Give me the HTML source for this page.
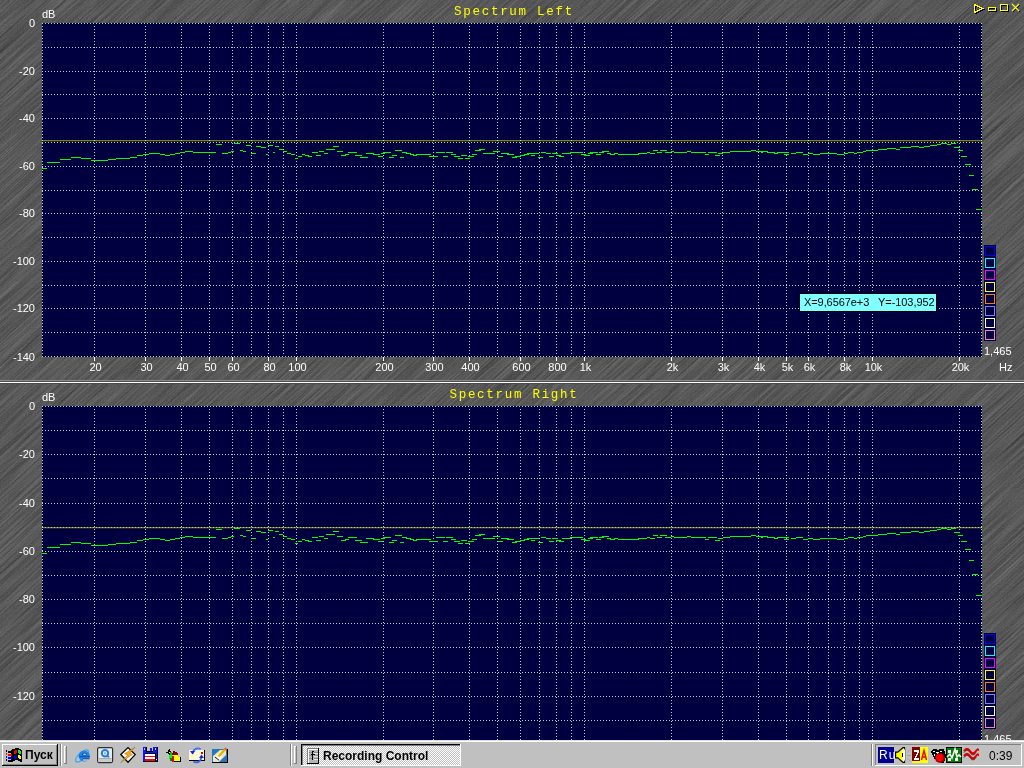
<!DOCTYPE html>
<html><head><meta charset="utf-8">
<style>
*{margin:0;padding:0;box-sizing:border-box}
html,body{width:1024px;height:768px;overflow:hidden}
body{position:relative;font-family:"Liberation Sans",sans-serif;
background-color:#5c5c5c;
}
svg{position:absolute;left:0;top:0}
.l{position:absolute;color:#fff;font-size:11px;line-height:13px;white-space:nowrap;will-change:transform}
.yl{left:0;width:35px;text-align:right}
.xl{width:61px;text-align:center}
.t{position:absolute;color:#ffff00;font-family:"Liberation Mono",monospace;font-size:12.5px;letter-spacing:1.72px;line-height:17px;white-space:pre;will-change:transform}
#tb{position:absolute;left:0;top:740px;width:1024px;height:28px;background:#c0c0c0}
.b{position:absolute;font-size:11px;line-height:13px;color:#000;white-space:nowrap;will-change:transform}
</style></head><body>
<svg width="1024" height="768" style="position:absolute;left:0;top:0">
<filter id="n" x="0" y="0" width="100%" height="100%" color-interpolation-filters="sRGB">
<feTurbulence type="fractalNoise" baseFrequency="1.3 0.012" numOctaves="3" seed="7"/>
<feColorMatrix type="matrix" values="0.3 0 0 0 0.195  0.3 0 0 0 0.195  0.3 0 0 0 0.195  0 0 0 0 1"/>
</filter>
<g transform="rotate(48 512 384)"><rect x="-300" y="-300" width="1624" height="1368" filter="url(#n)"/></g>
<filter id="g" x="0" y="0" width="100%" height="100%" color-interpolation-filters="sRGB">
<feTurbulence type="fractalNoise" baseFrequency="0.7" numOctaves="1" seed="11"/>
<feColorMatrix type="matrix" values="1 0 0 0 -0.15  1 0 0 0 -0.15  1 0 0 0 -0.15  0 0 0 0 0.1"/>
</filter>
<rect x="0" y="0" width="1024" height="768" filter="url(#g)"/>
</svg>
<svg width="1024" height="768" shape-rendering="crispEdges">
<rect x="0" y="380" width="1024" height="1" fill="#8a8a8a"/>
<rect x="0" y="381" width="1024" height="1" fill="#505050"/>
<rect x="0" y="382" width="1024" height="1" fill="#ffffff"/>
<rect x="0" y="383" width="1024" height="1" fill="#4a4a4a"/>
<rect x="42" y="23" width="940" height="334" fill="#000040"/><rect x="43" y="140" width="939" height="1" fill="#827a1c"/><rect x="43" y="141" width="939" height="1" fill="#24231e"/><g stroke="#a8dcbc" stroke-width="1" stroke-dasharray="1 2"><line x1="42" y1="23.5" x2="982" y2="23.5"/><line x1="42" y1="47.5" x2="982" y2="47.5"/><line x1="42" y1="71.5" x2="982" y2="71.5"/><line x1="42" y1="94.5" x2="982" y2="94.5"/><line x1="42" y1="118.5" x2="982" y2="118.5"/><line x1="42" y1="142.5" x2="982" y2="142.5"/><line x1="42" y1="166.5" x2="982" y2="166.5"/><line x1="42" y1="190.5" x2="982" y2="190.5"/><line x1="42" y1="213.5" x2="982" y2="213.5"/><line x1="42" y1="237.5" x2="982" y2="237.5"/><line x1="42" y1="261.5" x2="982" y2="261.5"/><line x1="42" y1="285.5" x2="982" y2="285.5"/><line x1="42" y1="308.5" x2="982" y2="308.5"/><line x1="42" y1="332.5" x2="982" y2="332.5"/><line x1="42" y1="356.5" x2="982" y2="356.5"/><line x1="94.5" y1="26" x2="94.5" y2="356"/><line x1="145.5" y1="26" x2="145.5" y2="356"/><line x1="181.5" y1="26" x2="181.5" y2="356"/><line x1="209.5" y1="26" x2="209.5" y2="356"/><line x1="232.5" y1="26" x2="232.5" y2="356"/><line x1="251.5" y1="26" x2="251.5" y2="356"/><line x1="268.5" y1="26" x2="268.5" y2="356"/><line x1="283.5" y1="26" x2="283.5" y2="356"/><line x1="296.5" y1="26" x2="296.5" y2="356"/><line x1="383.5" y1="26" x2="383.5" y2="356"/><line x1="433.5" y1="26" x2="433.5" y2="356"/><line x1="469.5" y1="26" x2="469.5" y2="356"/><line x1="497.5" y1="26" x2="497.5" y2="356"/><line x1="520.5" y1="26" x2="520.5" y2="356"/><line x1="539.5" y1="26" x2="539.5" y2="356"/><line x1="556.5" y1="26" x2="556.5" y2="356"/><line x1="571.5" y1="26" x2="571.5" y2="356"/><line x1="584.5" y1="26" x2="584.5" y2="356"/><line x1="671.5" y1="26" x2="671.5" y2="356"/><line x1="722.5" y1="26" x2="722.5" y2="356"/><line x1="758.5" y1="26" x2="758.5" y2="356"/><line x1="786.5" y1="26" x2="786.5" y2="356"/><line x1="808.5" y1="26" x2="808.5" y2="356"/><line x1="828.5" y1="26" x2="828.5" y2="356"/><line x1="844.5" y1="26" x2="844.5" y2="356"/><line x1="859.5" y1="26" x2="859.5" y2="356"/><line x1="872.5" y1="26" x2="872.5" y2="356"/><line x1="959.5" y1="26" x2="959.5" y2="356"/><line x1="42.5" y1="23" x2="42.5" y2="357"/><line x1="981.5" y1="23" x2="981.5" y2="357"/></g><path fill="#00ff00" d="M42 168h5v1h-5zM47 162h13v1h-13zM60 159h11v1h-11zM71 157h10v1h-10zM81 158h10v1h-10zM91 160h17v1h-17zM108 159h8v1h-8zM116 158h14v1h-14zM130 157h7v1h-7zM137 155h6v1h-6zM143 154h6v1h-6zM149 153h11v1h-11zM160 154h5v1h-5zM165 155h5v1h-5zM170 154h5v1h-5zM175 153h5v1h-5zM180 152h5v1h-5zM185 151h8v1h-8zM193 152h23v1h-23zM216 144h6v1h-6zM222 153h6v1h-6zM228 152h3v1h-3zM231 151h3v1h-3zM234 143h6v1h-6zM240 150h3v1h-3zM243 151h3v1h-3zM246 145h5v1h-5zM251 153h5v1h-5zM256 146h5v1h-5zM261 147h5v1h-5zM266 154h2v1h-2zM268 145h5v1h-5zM273 152h2v1h-2zM275 146h4v1h-4zM279 149h4v1h-4zM283 151h4v1h-4zM287 153h4v1h-4zM291 154h4v1h-4zM295 158h3v1h-3zM298 156h4v1h-4zM302 154h3v1h-3zM305 155h4v1h-4zM308 156h4v1h-4zM312 152h6v1h-6zM316 155h5v1h-5zM319 151h5v1h-5zM324 153h4v1h-4zM326 149h9v1h-9zM333 146h6v1h-6zM337 151h6v1h-6zM341 155h5v1h-5zM345 154h4v1h-4zM348 152h9v1h-9zM355 155h7v1h-7zM360 157h8v1h-8zM366 153h8v1h-8zM373 154h7v1h-7zM378 156h5v1h-5zM381 153h4v1h-4zM383 152h8v1h-8zM389 157h5v1h-5zM392 155h5v1h-5zM395 150h7v1h-7zM400 157h4v1h-4zM402 152h5v1h-5zM406 153h5v1h-5zM410 154h4v1h-4zM413 155h4v1h-4zM416 154h15v1h-15zM429 156h9v1h-9zM436 152h9v1h-9zM443 156h5v1h-5zM446 152h7v1h-7zM451 154h5v1h-5zM454 156h6v1h-6zM458 158h5v1h-5zM461 155h6v1h-6zM465 158h5v1h-5zM468 156h6v1h-6zM472 154h5v1h-5zM475 150h6v1h-6zM479 149h6v1h-6zM483 153h3v1h-3zM484 153h11v1h-11zM493 151h7v1h-7zM498 156h5v1h-5zM501 153h8v1h-8zM507 154h7v1h-7zM512 157h5v1h-5zM515 156h6v1h-6zM520 155h5v1h-5zM524 154h5v1h-5zM527 153h12v1h-12zM531 155h4v1h-4zM538 157h5v1h-5zM541 152h5v1h-5zM546 153h5v1h-5zM549 156h5v1h-5zM552 153h6v1h-6zM556 155h5v1h-5zM559 156h5v1h-5zM562 153h9v1h-9zM570 152h13v1h-13zM581 154h5v1h-5zM584 155h6v1h-6zM588 153h5v1h-5zM590 152h8v1h-8zM596 154h5v1h-5zM599 152h5v1h-5zM602 151h7v1h-7zM607 153h4v1h-4zM610 154h5v1h-5zM614 153h4v1h-4zM618 154h21v1h-21zM638 153h6v1h-6zM642 153h5v1h-5zM647 152h3v1h-3zM650 153h5v1h-5zM653 150h5v1h-5zM657 152h5v1h-5zM660 150h7v1h-7zM665 152h6v1h-6zM671 151h3v1h-3zM674 152h13v1h-13zM687 151h4v1h-4zM691 152h15v1h-15zM705 154h4v1h-4zM708 152h9v1h-9zM715 155h5v1h-5zM718 153h5v1h-5zM723 152h7v1h-7zM730 151h21v1h-21zM751 150h5v1h-5zM756 151h6v1h-6zM761 152h2v1h-2zM762 151h6v1h-6zM767 152h8v1h-8zM774 153h4v1h-4zM777 152h12v1h-12zM784 154h5v1h-5zM791 153h5v1h-5zM796 152h6v1h-6zM800 152h3v1h-3zM803 154h5v1h-5zM808 153h5v1h-5zM813 154h7v1h-7zM820 153h17v1h-17zM837 154h7v1h-7zM844 153h4v1h-4zM848 152h6v1h-6zM854 153h3v1h-3zM857 152h6v1h-6zM863 151h3v1h-3zM866 150h12v1h-12zM878 149h9v1h-9zM887 148h9v1h-9zM896 149h4v1h-4zM900 147h11v1h-11zM911 146h8v1h-8zM919 147h5v1h-5zM924 146h6v1h-6zM930 145h7v1h-7zM937 144h4v1h-4zM941 143h6v1h-6zM947 144h4v1h-4zM951 143h5v1h-5zM954 147h6v1h-6zM958 150h5v1h-5zM961 156h6v1h-6zM965 164h6v1h-6zM969 175h5v1h-5zM972 189h6v1h-6zM976 209h6v1h-6z"/><path fill="#fff" d="M94 357h1v4h-1zM145 357h1v4h-1zM181 357h1v4h-1zM209 357h1v4h-1zM232 357h1v4h-1zM268 357h1v4h-1zM296 357h1v4h-1zM383 357h1v4h-1zM433 357h1v4h-1zM469 357h1v4h-1zM520 357h1v4h-1zM556 357h1v4h-1zM584 357h1v4h-1zM671 357h1v4h-1zM722 357h1v4h-1zM758 357h1v4h-1zM786 357h1v4h-1zM808 357h1v4h-1zM844 357h1v4h-1zM872 357h1v4h-1zM959 357h1v4h-1z"/><rect x="984" y="245" width="12" height="96" fill="#000040"/><rect x="985.5" y="246.5" width="9" height="9" fill="none" stroke="#0000ff" stroke-width="1"/><rect x="985.5" y="258.5" width="9" height="9" fill="none" stroke="#00ffff" stroke-width="1"/><rect x="985.5" y="270.5" width="9" height="9" fill="none" stroke="#ff00ff" stroke-width="1"/><rect x="985.5" y="282.5" width="9" height="9" fill="none" stroke="#ffff00" stroke-width="1"/><rect x="985.5" y="294.5" width="9" height="9" fill="none" stroke="#ff8000" stroke-width="1"/><rect x="985.5" y="306.5" width="9" height="9" fill="none" stroke="#8080ff" stroke-width="1"/><rect x="985.5" y="318.5" width="9" height="9" fill="none" stroke="#ffffff" stroke-width="1"/><rect x="985.5" y="330.5" width="9" height="9" fill="none" stroke="#ff80c0" stroke-width="1"/>
<rect x="42" y="406" width="940" height="339" fill="#000040"/><rect x="43" y="527" width="939" height="1" fill="#827a1c"/><rect x="43" y="528" width="939" height="1" fill="#24231e"/><g stroke="#a8dcbc" stroke-width="1" stroke-dasharray="1 2"><line x1="42" y1="406.5" x2="982" y2="406.5"/><line x1="42" y1="430.5" x2="982" y2="430.5"/><line x1="42" y1="454.5" x2="982" y2="454.5"/><line x1="42" y1="478.5" x2="982" y2="478.5"/><line x1="42" y1="503.5" x2="982" y2="503.5"/><line x1="42" y1="527.5" x2="982" y2="527.5"/><line x1="42" y1="551.5" x2="982" y2="551.5"/><line x1="42" y1="575.5" x2="982" y2="575.5"/><line x1="42" y1="599.5" x2="982" y2="599.5"/><line x1="42" y1="623.5" x2="982" y2="623.5"/><line x1="42" y1="647.5" x2="982" y2="647.5"/><line x1="42" y1="672.5" x2="982" y2="672.5"/><line x1="42" y1="696.5" x2="982" y2="696.5"/><line x1="42" y1="720.5" x2="982" y2="720.5"/><line x1="42" y1="744.5" x2="982" y2="744.5"/><line x1="94.5" y1="409" x2="94.5" y2="744"/><line x1="145.5" y1="409" x2="145.5" y2="744"/><line x1="181.5" y1="409" x2="181.5" y2="744"/><line x1="209.5" y1="409" x2="209.5" y2="744"/><line x1="232.5" y1="409" x2="232.5" y2="744"/><line x1="251.5" y1="409" x2="251.5" y2="744"/><line x1="268.5" y1="409" x2="268.5" y2="744"/><line x1="283.5" y1="409" x2="283.5" y2="744"/><line x1="296.5" y1="409" x2="296.5" y2="744"/><line x1="383.5" y1="409" x2="383.5" y2="744"/><line x1="433.5" y1="409" x2="433.5" y2="744"/><line x1="469.5" y1="409" x2="469.5" y2="744"/><line x1="497.5" y1="409" x2="497.5" y2="744"/><line x1="520.5" y1="409" x2="520.5" y2="744"/><line x1="539.5" y1="409" x2="539.5" y2="744"/><line x1="556.5" y1="409" x2="556.5" y2="744"/><line x1="571.5" y1="409" x2="571.5" y2="744"/><line x1="584.5" y1="409" x2="584.5" y2="744"/><line x1="671.5" y1="409" x2="671.5" y2="744"/><line x1="722.5" y1="409" x2="722.5" y2="744"/><line x1="758.5" y1="409" x2="758.5" y2="744"/><line x1="786.5" y1="409" x2="786.5" y2="744"/><line x1="808.5" y1="409" x2="808.5" y2="744"/><line x1="828.5" y1="409" x2="828.5" y2="744"/><line x1="844.5" y1="409" x2="844.5" y2="744"/><line x1="859.5" y1="409" x2="859.5" y2="744"/><line x1="872.5" y1="409" x2="872.5" y2="744"/><line x1="959.5" y1="409" x2="959.5" y2="744"/><line x1="42.5" y1="406" x2="42.5" y2="745"/><line x1="981.5" y1="406" x2="981.5" y2="745"/></g><path fill="#00ff00" d="M42 553h5v1h-5zM47 547h13v1h-13zM60 544h11v1h-11zM71 542h10v1h-10zM81 543h10v1h-10zM91 545h17v1h-17zM108 544h8v1h-8zM116 543h14v1h-14zM130 542h7v1h-7zM137 540h6v1h-6zM143 539h6v1h-6zM149 538h11v1h-11zM160 539h5v1h-5zM165 540h5v1h-5zM170 539h5v1h-5zM175 538h5v1h-5zM180 537h5v1h-5zM185 536h8v1h-8zM193 537h23v1h-23zM216 529h6v1h-6zM222 538h6v1h-6zM228 537h3v1h-3zM231 536h3v1h-3zM234 528h6v1h-6zM240 535h3v1h-3zM243 536h3v1h-3zM246 530h5v1h-5zM251 538h5v1h-5zM256 531h5v1h-5zM261 532h5v1h-5zM266 539h2v1h-2zM268 530h5v1h-5zM273 537h2v1h-2zM275 531h4v1h-4zM279 534h4v1h-4zM283 536h4v1h-4zM287 538h4v1h-4zM291 539h4v1h-4zM295 543h3v1h-3zM298 541h4v1h-4zM302 539h3v1h-3zM305 540h4v1h-4zM308 541h4v1h-4zM312 537h6v1h-6zM316 540h5v1h-5zM319 536h5v1h-5zM324 538h4v1h-4zM326 534h9v1h-9zM333 531h6v1h-6zM337 536h6v1h-6zM341 540h5v1h-5zM345 539h4v1h-4zM348 537h9v1h-9zM355 540h7v1h-7zM360 542h8v1h-8zM366 538h8v1h-8zM373 539h7v1h-7zM378 541h5v1h-5zM381 538h4v1h-4zM383 537h8v1h-8zM389 542h5v1h-5zM392 540h5v1h-5zM395 535h7v1h-7zM400 542h4v1h-4zM402 537h5v1h-5zM406 538h5v1h-5zM410 539h4v1h-4zM413 540h4v1h-4zM416 539h15v1h-15zM429 541h9v1h-9zM436 537h9v1h-9zM443 541h5v1h-5zM446 537h7v1h-7zM451 539h5v1h-5zM454 541h6v1h-6zM458 543h5v1h-5zM461 540h6v1h-6zM465 543h5v1h-5zM468 541h6v1h-6zM472 539h5v1h-5zM475 535h6v1h-6zM479 534h6v1h-6zM483 538h3v1h-3zM484 538h11v1h-11zM493 536h7v1h-7zM498 541h5v1h-5zM501 538h8v1h-8zM507 539h7v1h-7zM512 542h5v1h-5zM515 541h6v1h-6zM520 540h5v1h-5zM524 539h5v1h-5zM527 538h12v1h-12zM531 540h4v1h-4zM538 542h5v1h-5zM541 537h5v1h-5zM546 538h5v1h-5zM549 541h5v1h-5zM552 538h6v1h-6zM556 540h5v1h-5zM559 541h5v1h-5zM562 538h9v1h-9zM570 537h13v1h-13zM581 539h5v1h-5zM584 540h6v1h-6zM588 538h5v1h-5zM590 537h8v1h-8zM596 539h5v1h-5zM599 537h5v1h-5zM602 536h7v1h-7zM607 538h4v1h-4zM610 539h5v1h-5zM614 538h4v1h-4zM618 539h21v1h-21zM638 538h6v1h-6zM642 538h5v1h-5zM647 537h3v1h-3zM650 538h5v1h-5zM653 535h5v1h-5zM657 537h5v1h-5zM660 535h7v1h-7zM665 537h6v1h-6zM671 536h3v1h-3zM674 537h13v1h-13zM687 536h4v1h-4zM691 537h15v1h-15zM705 539h4v1h-4zM708 537h9v1h-9zM715 540h5v1h-5zM718 538h5v1h-5zM723 537h7v1h-7zM730 536h21v1h-21zM751 535h5v1h-5zM756 536h6v1h-6zM761 537h2v1h-2zM762 536h6v1h-6zM767 537h8v1h-8zM774 538h4v1h-4zM777 537h12v1h-12zM784 539h5v1h-5zM791 538h5v1h-5zM796 537h6v1h-6zM800 537h3v1h-3zM803 539h5v1h-5zM808 538h5v1h-5zM813 539h7v1h-7zM820 538h17v1h-17zM837 539h7v1h-7zM844 538h4v1h-4zM848 537h6v1h-6zM854 538h3v1h-3zM857 537h6v1h-6zM863 536h3v1h-3zM866 535h12v1h-12zM878 534h9v1h-9zM887 533h9v1h-9zM896 534h4v1h-4zM900 532h11v1h-11zM911 531h8v1h-8zM919 532h5v1h-5zM924 531h6v1h-6zM930 530h7v1h-7zM937 529h4v1h-4zM941 528h6v1h-6zM947 529h4v1h-4zM951 528h5v1h-5zM954 532h6v1h-6zM958 535h5v1h-5zM961 541h6v1h-6zM965 549h6v1h-6zM969 560h5v1h-5zM972 574h6v1h-6zM976 595h6v1h-6z"/><path fill="#fff" d="M94 745h1v4h-1zM145 745h1v4h-1zM181 745h1v4h-1zM209 745h1v4h-1zM232 745h1v4h-1zM268 745h1v4h-1zM296 745h1v4h-1zM383 745h1v4h-1zM433 745h1v4h-1zM469 745h1v4h-1zM520 745h1v4h-1zM556 745h1v4h-1zM584 745h1v4h-1zM671 745h1v4h-1zM722 745h1v4h-1zM758 745h1v4h-1zM786 745h1v4h-1zM808 745h1v4h-1zM844 745h1v4h-1zM872 745h1v4h-1zM959 745h1v4h-1z"/><rect x="984" y="633" width="12" height="96" fill="#000040"/><rect x="985.5" y="634.5" width="9" height="9" fill="none" stroke="#0000ff" stroke-width="1"/><rect x="985.5" y="646.5" width="9" height="9" fill="none" stroke="#00ffff" stroke-width="1"/><rect x="985.5" y="658.5" width="9" height="9" fill="none" stroke="#ff00ff" stroke-width="1"/><rect x="985.5" y="670.5" width="9" height="9" fill="none" stroke="#ffff00" stroke-width="1"/><rect x="985.5" y="682.5" width="9" height="9" fill="none" stroke="#ff8000" stroke-width="1"/><rect x="985.5" y="694.5" width="9" height="9" fill="none" stroke="#8080ff" stroke-width="1"/><rect x="985.5" y="706.5" width="9" height="9" fill="none" stroke="#ffffff" stroke-width="1"/><rect x="985.5" y="718.5" width="9" height="9" fill="none" stroke="#ff80c0" stroke-width="1"/>
<g fill="none" stroke="#000030" stroke-width="1.5" transform="translate(1,1)">
<path d="M974.5 4.5V12.5L982.5 8.5Z"/>
<rect x="988.5" y="7.5" width="7" height="3"/>
<rect x="1000.5" y="4.5" width="7" height="6"/>
<path d="M1012 4L1019 11M1019 4L1012 11" stroke-width="1.2"/>
</g>
<g fill="none" stroke="#ffff00" stroke-width="1.5">
<path d="M974.5 4.5V12.5L982.5 8.5Z"/>
<rect x="988.5" y="7.5" width="7" height="3"/>
<rect x="1000.5" y="4.5" width="7" height="6"/>
<path d="M1012 4L1019 11M1019 4L1012 11" stroke-width="1.2" shape-rendering="auto"/>
</g>
<rect x="799.5" y="293.5" width="137" height="18" fill="#80ffff" stroke="#000" stroke-width="1"/>
</svg>
<div class="t" style="left:2px;top:4px;width:1024px;text-align:center">Spectrum Left</div><div class="l" style="left:42px;top:8px">dB</div><div class="l yl" style="top:17px">0</div><div class="l yl" style="top:65px">-20</div><div class="l yl" style="top:112px">-40</div><div class="l yl" style="top:160px">-60</div><div class="l yl" style="top:207px">-80</div><div class="l yl" style="top:255px">-100</div><div class="l yl" style="top:302px">-120</div><div class="l yl" style="top:351px">-140</div><div class="l xl" style="left:65px;top:361px">20</div><div class="l xl" style="left:116px;top:361px">30</div><div class="l xl" style="left:152px;top:361px">40</div><div class="l xl" style="left:180px;top:361px">50</div><div class="l xl" style="left:203px;top:361px">60</div><div class="l xl" style="left:239px;top:361px">80</div><div class="l xl" style="left:267px;top:361px">100</div><div class="l xl" style="left:354px;top:361px">200</div><div class="l xl" style="left:404px;top:361px">300</div><div class="l xl" style="left:440px;top:361px">400</div><div class="l xl" style="left:491px;top:361px">600</div><div class="l xl" style="left:527px;top:361px">800</div><div class="l xl" style="left:555px;top:361px">1k</div><div class="l xl" style="left:642px;top:361px">2k</div><div class="l xl" style="left:693px;top:361px">3k</div><div class="l xl" style="left:729px;top:361px">4k</div><div class="l xl" style="left:757px;top:361px">5k</div><div class="l xl" style="left:779px;top:361px">6k</div><div class="l xl" style="left:815px;top:361px">8k</div><div class="l xl" style="left:843px;top:361px">10k</div><div class="l xl" style="left:930px;top:361px">20k</div><div class="l" style="left:984px;top:345px">1,465</div><div class="l" style="left:999px;top:361px">Hz</div>
<div class="t" style="left:2px;top:387px;width:1024px;text-align:center">Spectrum Right</div><div class="l" style="left:42px;top:391px">dB</div><div class="l yl" style="top:400px">0</div><div class="l yl" style="top:448px">-20</div><div class="l yl" style="top:497px">-40</div><div class="l yl" style="top:545px">-60</div><div class="l yl" style="top:593px">-80</div><div class="l yl" style="top:641px">-100</div><div class="l yl" style="top:690px">-120</div><div class="l yl" style="top:739px">-140</div><div class="l xl" style="left:65px;top:749px">20</div><div class="l xl" style="left:116px;top:749px">30</div><div class="l xl" style="left:152px;top:749px">40</div><div class="l xl" style="left:180px;top:749px">50</div><div class="l xl" style="left:203px;top:749px">60</div><div class="l xl" style="left:239px;top:749px">80</div><div class="l xl" style="left:267px;top:749px">100</div><div class="l xl" style="left:354px;top:749px">200</div><div class="l xl" style="left:404px;top:749px">300</div><div class="l xl" style="left:440px;top:749px">400</div><div class="l xl" style="left:491px;top:749px">600</div><div class="l xl" style="left:527px;top:749px">800</div><div class="l xl" style="left:555px;top:749px">1k</div><div class="l xl" style="left:642px;top:749px">2k</div><div class="l xl" style="left:693px;top:749px">3k</div><div class="l xl" style="left:729px;top:749px">4k</div><div class="l xl" style="left:757px;top:749px">5k</div><div class="l xl" style="left:779px;top:749px">6k</div><div class="l xl" style="left:815px;top:749px">8k</div><div class="l xl" style="left:843px;top:749px">10k</div><div class="l xl" style="left:930px;top:749px">20k</div><div class="l" style="left:984px;top:733px">1,465</div><div class="l" style="left:999px;top:749px">Hz</div>
<div class="b" style="left:804px;top:296px;letter-spacing:-0.08px">X=9,6567e+3&nbsp;&nbsp;&nbsp;Y=-103,952</div>

<div id="tb">
<svg width="1024" height="28" shape-rendering="crispEdges" style="position:absolute;left:0;top:0">
<rect x="0" y="0" width="1024" height="1" fill="#dfdfdf"/>
<rect x="0" y="1" width="1024" height="1" fill="#ffffff"/>
<!-- start button -->
<rect x="2" y="4" width="56" height="22" fill="#000"/>
<rect x="2" y="4" width="55" height="21" fill="#fff"/>
<rect x="3" y="5" width="54" height="20" fill="#808080"/>
<rect x="3" y="5" width="53" height="19" fill="#c0c0c0"/>
<!-- logo -->
<g>
<path fill="#000" d="M15 8h4v1h2v1h1v12h-2v-1h-2v-1h-3v1h-2v1h-2v-12h1v-1h3z"/>
<rect x="15" y="10" width="2" height="1" fill="#ff0000"/><rect x="14" y="11" width="3" height="2" fill="#ff0000"/><rect x="14" y="13" width="2" height="1" fill="#ff0000"/>
<rect x="18" y="10" width="2" height="1" fill="#00ff00"/><rect x="18" y="11" width="3" height="2" fill="#00ff00"/><rect x="19" y="13" width="2" height="1" fill="#00ff00"/>
<rect x="15" y="15" width="2" height="1" fill="#0000ff"/><rect x="14" y="16" width="3" height="2" fill="#0000ff"/><rect x="14" y="18" width="2" height="1" fill="#0000ff"/>
<rect x="18" y="15" width="2" height="1" fill="#ffff00"/><rect x="18" y="16" width="3" height="2" fill="#ffff00"/><rect x="19" y="18" width="2" height="1" fill="#ffff00"/>
<rect x="6" y="10" width="1" height="2" fill="#000"/>
<rect x="6" y="13" width="1" height="2" fill="#ff0000"/>
<rect x="6" y="16" width="1" height="2" fill="#0000ff"/>
<rect x="6" y="19" width="1" height="2" fill="#000"/>
<rect x="8" y="11" width="4" height="2" fill="#000"/>
<rect x="8" y="14" width="4" height="2" fill="#ff0000"/>
<rect x="8" y="17" width="4" height="2" fill="#0000ff"/>
<rect x="8" y="20" width="4" height="2" fill="#000"/>
</g>
<!-- separators / grips -->
<rect x="60" y="4" width="1" height="22" fill="#808080"/>
<rect x="61" y="4" width="1" height="22" fill="#fff"/>
<rect x="64" y="6" width="3" height="18" fill="#808080"/>
<rect x="64" y="6" width="2" height="17" fill="#fff"/>
<rect x="65" y="7" width="1" height="16" fill="#c0c0c0"/>
<rect x="290" y="4" width="1" height="22" fill="#808080"/>
<rect x="291" y="4" width="1" height="22" fill="#fff"/>
<rect x="294" y="6" width="3" height="18" fill="#808080"/>
<rect x="294" y="6" width="2" height="17" fill="#fff"/>
<rect x="295" y="7" width="1" height="16" fill="#c0c0c0"/>
<!-- task button (pressed) -->
<defs><pattern id="chk" width="2" height="2" patternUnits="userSpaceOnUse"><rect width="2" height="2" fill="#c0c0c0"/><rect width="1" height="1" fill="#fff"/><rect x="1" y="1" width="1" height="1" fill="#fff"/></pattern></defs>
<rect x="301" y="4" width="160" height="22" fill="#fff"/>
<rect x="301" y="4" width="159" height="21" fill="#000"/>
<rect x="302" y="5" width="158" height="20" fill="#808080"/>
<rect x="303" y="6" width="157" height="19" fill="url(#chk)"/>
<!-- task icon -->
<rect x="307" y="8" width="12" height="16" fill="#808080"/>
<rect x="318" y="8" width="1" height="16" fill="#000"/>
<rect x="307" y="23" width="12" height="1" fill="#000"/>
<rect x="308" y="9" width="10" height="14" fill="#fff"/>
<rect x="309" y="10" width="9" height="13" fill="#b4b4b4"/>
<rect x="309" y="12" width="3" height="1" fill="#8c8c8c"/><rect x="314" y="12" width="4" height="1" fill="#8c8c8c"/>
<rect x="309" y="15" width="3" height="1" fill="#8c8c8c"/><rect x="314" y="15" width="4" height="1" fill="#8c8c8c"/>
<rect x="309" y="18" width="3" height="1" fill="#8c8c8c"/><rect x="314" y="18" width="4" height="1" fill="#8c8c8c"/>
<rect x="314" y="13" width="4" height="1" fill="#e8e8e8"/><rect x="314" y="16" width="4" height="1" fill="#e8e8e8"/><rect x="314" y="19" width="4" height="1" fill="#e8e8e8"/>
<rect x="312" y="11" width="2" height="1" fill="#000"/>
<rect x="312" y="12" width="1" height="8" fill="#000"/>
<rect x="311" y="14" width="4" height="1" fill="#000"/>
<!-- tray separator -->
<rect x="871" y="4" width="1" height="22" fill="#808080"/>
<rect x="872" y="4" width="1" height="22" fill="#fff"/>
<!-- tray -->
<rect x="875" y="4" width="147" height="22" fill="#fff"/>
<rect x="875" y="4" width="146" height="21" fill="#808080"/>
<rect x="876" y="5" width="145" height="20" fill="#c0c0c0"/>
<!-- Ru -->
<rect x="878" y="7" width="16" height="16" fill="#000090"/>
<!-- speaker -->
<path fill="#ffff00" stroke="#000" stroke-width="1.2" shape-rendering="auto" d="M895.6 12.2h2.2l5.2-4.6h1.5v14.8h-1.5l-5.2-4.6h-2.2z"/>
<ellipse cx="903.8" cy="15" rx="1.6" ry="6.6" fill="#fff" shape-rendering="auto"/>
<rect x="902" y="13" width="1" height="4" fill="#000"/>
<rect x="905" y="9" width="1" height="12" fill="#909090"/>
<path fill="none" stroke="#a0a0a0" stroke-width="1" shape-rendering="auto" d="M907.5 12.5l3-3M907 15.5h4M907.5 18.5l3 3"/>
<!-- ZA -->
<rect x="912" y="7" width="16" height="16" fill="#ffff00"/>
<rect x="912" y="7" width="8" height="14" fill="#800000"/>
<path fill="#fff" d="M914 10h5v2l-1 1v1l-1 1v1l-1 1v1h3v2h-5v-2l1-1v-1l1-1v-1l1-1v-1h-3z"/>
<path fill="none" stroke="#e00000" stroke-width="1.4" shape-rendering="auto" d="M921.5 20l2.5-9.5 2.5 9.5M922.5 17h3"/>
<!-- ball -->
<path fill="#000" d="M931 10h2v-1h4v1h2v-1h5v2h1v3h1v4h-1v3h-1v2h-3v-1h-3v-1h-2v-2h-2v-2h-1v-2h-1v-2h-1v-2h1z"/>
<path fill="#fff" d="M933 11h2v1h-2zM936 12h3v1h-1v1h-1v-1h-1zM940 11h2v1h-2zM934 14h1v2h-1z"/>
<circle cx="940" cy="18" r="5" fill="#a00000" shape-rendering="auto"/>
<circle cx="939.6" cy="17.6" r="3.6" fill="#ff0000" shape-rendering="auto"/>
<!-- green -->
<rect x="946" y="7" width="16" height="16" fill="#000"/>
<rect x="947" y="8" width="14" height="14" fill="#008000"/>
<rect x="948" y="10" width="3" height="3" fill="#fff"/>
<rect x="955" y="10" width="3" height="3" fill="#fff"/>
<rect x="948" y="18" width="3" height="3" fill="#fff"/>
<rect x="955" y="18" width="3" height="3" fill="#fff"/>
<path fill="none" stroke="#fff" stroke-width="1.6" shape-rendering="auto" d="M947 17l3-3 2 4 3-9 2 8 2-2 2 2"/>
<!-- red wave -->
<path fill="none" stroke="#e00000" stroke-width="2" shape-rendering="auto" d="M964 11c2-3 4-3 6 0s4 3 6 0 2-1 3-1M964 16c2-3 4-3 6 0s4 3 6 0 2-1 3-1"/>
<path fill="none" stroke="#600000" stroke-width="1" shape-rendering="auto" d="M964 12.5c2-3 4-3 6 0s4 3 6 0M964 17.5c2-3 4-3 6 0s4 3 6 0"/>
<!-- quick launch icons -->
<g transform="translate(74,7)" shape-rendering="auto">
<ellipse cx="8" cy="9" rx="8.2" ry="3.4" transform="rotate(-42 8 9)" fill="none" stroke="#3aa8f8" stroke-width="1.3"/>
<circle cx="10.2" cy="9" r="5.6" fill="#1c88e8"/>
<ellipse cx="10.4" cy="7.2" rx="2.4" ry="1.4" fill="#10408a"/>
<ellipse cx="10.6" cy="7.3" rx="1.6" ry=".8" fill="#c0d8f0"/>
<rect x="5" y="8.8" width="11" height="1.4" fill="#0c58c0"/>
<path d="M9 11.2h7v2.6h-7z" fill="#c0c0c0"/>
<path d="M8.6 11.2h7v1h-7z" fill="#10408a"/>
</g>
<g transform="translate(97,7)" shape-rendering="auto">
<rect x="0.6" y="0.6" width="15" height="15" rx="1.5" fill="#e8e8e8" stroke="#303030" stroke-width="1.2"/>
<rect x="1.5" y="11" width="13" height="3.8" fill="#c8c8c8"/>
<rect x="1.5" y="11" width="13" height=".8" fill="#a8a8a8"/>
<circle cx="8" cy="6.3" r="3.2" fill="none" stroke="#2080e0" stroke-width="2"/>
<path d="M9.5 8l2.5 2.2" stroke="#2080e0" stroke-width="1.8"/>
<circle cx="8" cy="6.3" r="1" fill="#60b0f0"/>
</g>
<g transform="translate(120,7)" shape-rendering="auto">
<path d="M0.8 7.5L8 0.6l7.2 7-7.2 7.6z" fill="#fff" stroke="#000" stroke-width="1.3"/>
<path d="M15 0.2L4.5 6.8l3.2 1.2L0.8 15.6 12.5 7.2 9.6 6.2z" fill="#f8a818" stroke="#a06000" stroke-width=".5"/>
</g>
<g transform="translate(143,7)">
<rect x="0" y="0" width="15" height="15" fill="#000"/>
<rect x="0" y="0" width="14" height="14" fill="#0a14ff"/>
<rect x="3" y="0" width="7" height="5" fill="#000"/>
<rect x="4" y="0" width="6" height="4" fill="#c8c8b0"/>
<rect x="7" y="1" width="2" height="3" fill="#0a14ff"/>
<rect x="1" y="1" width="1" height="2" fill="#c8c8b0"/>
<rect x="12" y="1" width="1" height="2" fill="#c8c8b0"/>
<rect x="2" y="6" width="11" height="9" fill="#000"/>
<rect x="2" y="7" width="10" height="7" fill="#fff"/>
<rect x="2" y="9" width="10" height="1" fill="#ff0000"/>
<rect x="2" y="12" width="10" height="2" fill="#ff0000"/>
<rect x="13" y="12" width="1" height="1" fill="#fff"/>
</g>
<g transform="translate(166,7)">
<path fill="#000" d="M0 5h2v-2h1v-1h1v2h1v1h1v2h-1v2h-1v-1h-1v-1h-1v-1h-2z"/>
<rect x="3" y="5" width="1" height="1" fill="#fff"/>
<rect x="4" y="5" width="2" height="3" fill="#00c000"/>
<rect x="3" y="8" width="3" height="4" fill="#00ff00"/>
<rect x="4" y="11" width="3" height="3" fill="#008000"/>
<path fill="#800000" d="M6 6h1v-2h2v1h2v1h1v2h-6z"/>
<rect x="7" y="8" width="5" height="2" fill="#ffff00"/>
<rect x="6" y="9" width="2" height="6" fill="#e00000"/>
<rect x="8" y="10" width="7" height="5" fill="#000"/>
<rect x="8" y="10" width="6" height="4" fill="#ffff00"/>
</g>
<g transform="translate(189,7)">
<rect x="0" y="3" width="16" height="11" fill="#000"/>
<rect x="0" y="3" width="15" height="10" fill="#fff8d0"/>
<rect x="0" y="3" width="15" height="1" fill="#fff"/>
<rect x="12" y="5" width="2" height="2" fill="#e00000"/>
<path fill="none" stroke="#3060f0" stroke-width="1.8" shape-rendering="auto" d="M3.5 6.5C4.5 2 8.5 0 11.5 2.5"/>
<path fill="none" stroke="#60c0ff" stroke-width=".8" shape-rendering="auto" d="M4.5 5.5C5.5 2.5 8.5 1.2 10.8 2.6"/>
<path fill="#2020d0" d="M1 4h5l-2.5 3.5z" shape-rendering="auto"/>
<path fill="none" stroke="#3060f0" stroke-width="1.8" shape-rendering="auto" d="M12.5 10.5C11.5 15 7.5 16.5 4.5 14.5"/>
<path fill="#2020d0" d="M15 11h-5l2.5-3.5z" shape-rendering="auto"/>
</g>
<g transform="translate(212,7)">
<rect x="0" y="2" width="16" height="14" fill="#000"/>
<rect x="0" y="2" width="15" height="13" fill="#2878b8"/>
<path fill="#ece6c8" d="M1 9L8 3h6v5l-7 7H1z" shape-rendering="auto"/>
<path fill="#fff" d="M3 10l3-3 4 3-3 3z" shape-rendering="auto"/>
<path fill="none" stroke="#000" stroke-width=".9" d="M3 10l4 3.2" shape-rendering="auto"/>
<path fill="none" stroke="#e8b000" stroke-width="2.2" d="M6.5 9.5l7-7.5" shape-rendering="auto"/>
<path fill="none" stroke="#ff4040" stroke-width="2.2" d="M13 2.6l1.2-1.3" shape-rendering="auto"/>
</g>
</svg>
<div class="b" style="left:25px;top:9px;font-weight:bold;font-size:12px">Пуск</div>
<div class="b" style="left:323px;top:10px;font-weight:bold;font-size:12px">Recording Control</div>
<div class="b" style="left:879px;top:9px;color:#fff;font-size:12px;letter-spacing:1.2px">Ru</div>
<div class="b" style="left:989px;top:10px;font-size:12px">0:39</div>
</div>

</body></html>
